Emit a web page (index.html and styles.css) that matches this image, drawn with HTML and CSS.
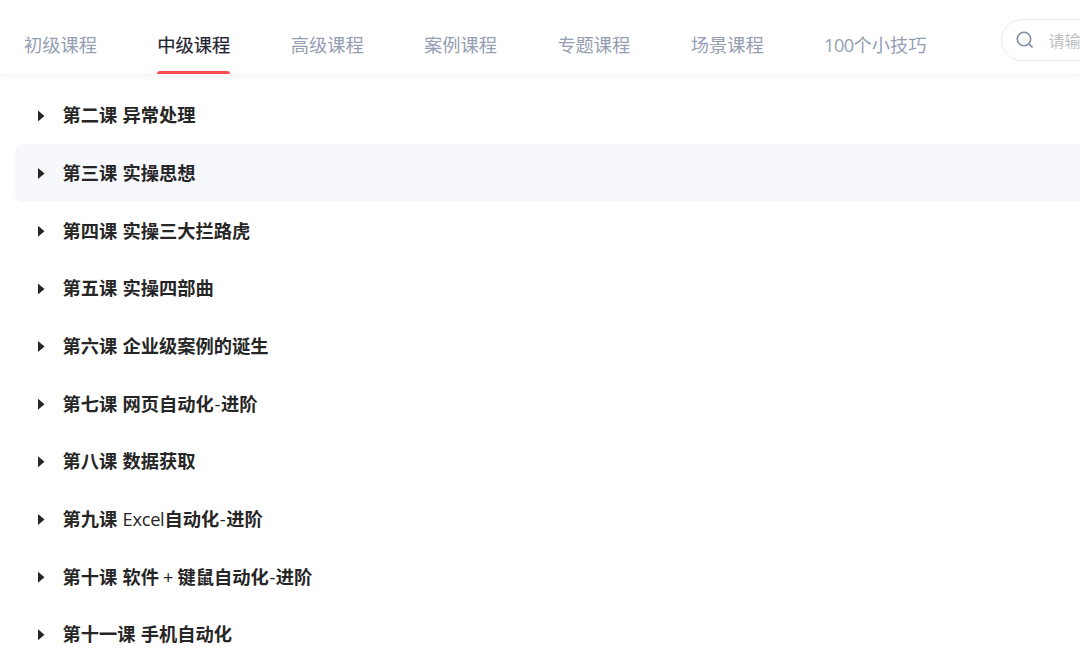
FILE: index.html
```
<!DOCTYPE html>
<html lang="zh-CN">
<head>
    <meta charset="UTF-8">
    <meta name="viewport" content="width=device-width, initial-scale=1.0">
    <title>中级课程</title>
    <link rel="stylesheet" href="styles.css">
</head>
<body>
    <header class="header">
        <nav class="tabs">
            <a class="tab">初级课程</a>
            <a class="tab tab--active">中级课程</a>
            <a class="tab">高级课程</a>
            <a class="tab">案例课程</a>
            <a class="tab">专题课程</a>
            <a class="tab">场景课程</a>
            <a class="tab"><span class="digits">100</span>个小技巧</a>
        </nav>
        <div class="search">
            <svg class="search__icon" viewBox="0 0 18 18" aria-hidden="true">
                <circle cx="8" cy="8" r="6.7"/>
                <path d="M12.8 12.8L16.6 16.4"/>
            </svg>
            <span class="search__placeholder">请输</span>
        </div>
    </header>

    <main class="lessons">
        <div class="lesson"><span class="arrow"></span><span class="lesson__title">第二课 异常处理</span></div>
        <div class="lesson lesson--hover"><span class="arrow"></span><span class="lesson__title">第三课 实操思想</span></div>
        <div class="lesson"><span class="arrow"></span><span class="lesson__title">第四课 实操三大拦路虎</span></div>
        <div class="lesson"><span class="arrow"></span><span class="lesson__title">第五课 实操四部曲</span></div>
        <div class="lesson"><span class="arrow"></span><span class="lesson__title">第六课 企业级案例的诞生</span></div>
        <div class="lesson"><span class="arrow"></span><span class="lesson__title">第七课 网页自动化<span class="latin latin--dash">-</span>进阶</span></div>
        <div class="lesson"><span class="arrow"></span><span class="lesson__title">第八课 数据获取</span></div>
        <div class="lesson"><span class="arrow"></span><span class="lesson__title">第九课 <span class="latin latin--word">Excel</span>自动化<span class="latin latin--dash">-</span>进阶</span></div>
        <div class="lesson"><span class="arrow"></span><span class="lesson__title">第十课 软件<span class="latin latin--plus">+</span>键鼠自动化<span class="latin latin--dash">-</span>进阶</span></div>
        <div class="lesson"><span class="arrow"></span><span class="lesson__title">第十一课 手机自动化</span></div>
    </main>
</body>
</html>
```

FILE: styles.css
```
* {
    margin: 0;
    padding: 0;
    box-sizing: border-box;
}
body {
    font-family: "Open Sans", "Noto Sans CJK SC", sans-serif;
    font-size: 18.25px;
    height: 100vh;
    overflow: hidden;
    background-color: #ffffff;
    color: #262626;
}
.header {
    display: flex;
    height: 74px;
    padding-left: 24px;
    white-space: nowrap;
    box-shadow: 0 2px 8px rgba(0, 0, 0, 0.06);
}
.tabs {
    display: flex;
    flex: none;
    gap: 60.35px;
    width: 976.5px;
}
.tab {
    display: flex;
    flex-direction: column;
    height: 74px;
    padding-top: 31px;
    line-height: 28px;
    color: #959eb3;
}
.tab:last-child {
    display: block;
}
.tab--active {
    color: #1f2430;
    -webkit-text-stroke: 0.2px #1f2430;
}
/* Underline of the current tab */
.tab--active::after {
    content: "";
    height: 3px;
    margin-top: auto;
    border-radius: 3px 3px 0 0;
    background-color: #ff4d4f;
}
.digits {
    letter-spacing: -0.6px;
}
/* Runs to the window edge, so only the left end is rounded */
.search {
    display: flex;
    flex: 1;
    align-items: center;
    min-width: 0;
    height: 42px;
    margin-top: 19px;
    padding-left: 14.5px;
    border: 1px solid #ebebeb;
    border-right: none;
    border-radius: 21px 0 0 21px;
    overflow: hidden;
}
.search__icon {
    flex: none;
    width: 18px;
    height: 18px;
    fill: none;
    stroke: #7f8fa9;
    stroke-width: 1.6;
}
.search__placeholder {
    margin-left: 14.5px;
    font-size: 16px;
    color: #bfbfbf;
}
.lessons {
    padding: 12.6px 0 0 14.5px;
}
.lesson {
    display: flex;
    align-items: center;
    height: 57.67px;
    padding-left: 23.5px;
    border-radius: 7px 0 0 7px;
}
.lesson--hover {
    background-color: #f7f8fc;
}
.arrow {
    width: 6.5px;
    height: 11px;
    margin-top: 1px;
    background-color: #262626;
    clip-path: polygon(0 0, 100% 50%, 0 100%);
}
.lesson__title {
    margin-left: 18px;
    font-weight: 700;
    line-height: 28px;
    white-space: nowrap;
    word-spacing: 0.6px;
}
.latin {
    font-weight: 400;
}
.latin--word {
    letter-spacing: -0.3px;
}
.latin--plus {
    margin: 0 4px;
}
.latin--dash {
    margin: 0 0.6px;
}
```
